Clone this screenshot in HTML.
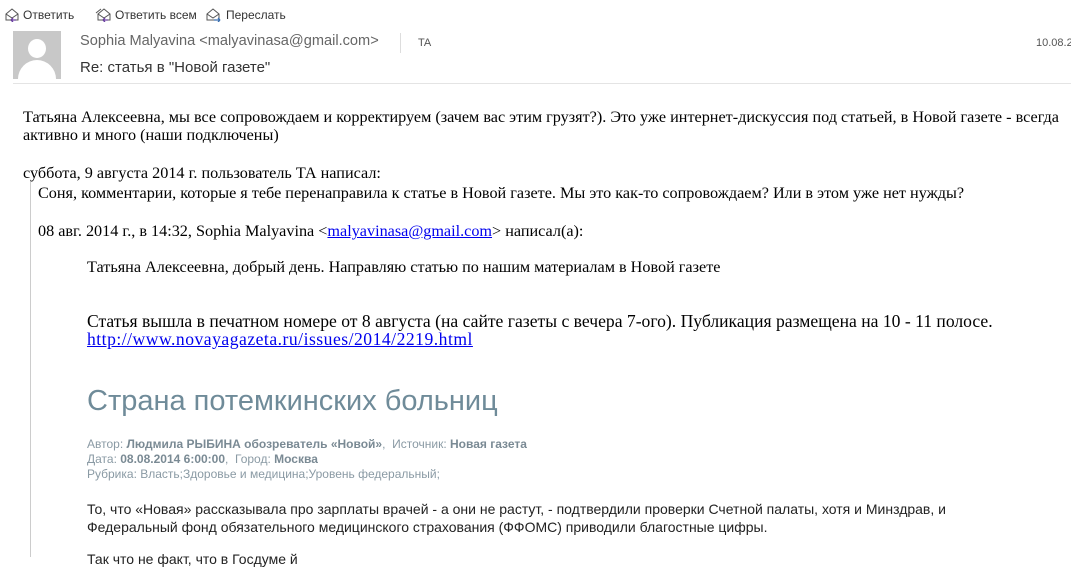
<!DOCTYPE html>
<html><head><meta charset="utf-8"><style>
body{margin:0;width:1071px;height:557px;overflow:hidden;background:#fff;position:relative;font-family:"Liberation Serif","Noto Serif CJK SC",serif;color:#000}
.a{position:absolute;white-space:nowrap}
.ui{font-family:"Liberation Sans","Noto Sans CJK SC",sans-serif}
.tb{font-size:12px;color:#333;top:8px}
.s{font-size:16.2px}
.m{font-family:"Liberation Sans",sans-serif;font-size:12px;color:#8a9aa4}
.m b{color:#7a8a94}
.p{font-family:"Liberation Sans",sans-serif;font-size:14px;color:#222}
a{color:#00e;text-decoration:underline}
</style></head><body>
<svg class="a" style="left:5px;top:8px" width="16" height="14" viewBox="0 0 16 14"><path d="M1 6 L7 1 L13 6 V12 H1 Z M1 6 L7 10 L13 6" fill="none" stroke="#555" stroke-width="1"/><path d="M6 12 H11 M6 12 l2 -2 M6 12 l2 2" stroke="#6a3fa0" stroke-width="1.3" fill="none"/></svg>
<div class="a ui tb" style="left:23px">Ответить</div>
<svg class="a" style="left:95px;top:7px" width="18" height="15" viewBox="0 0 18 15"><path d="M1 6 L6 2 M3 7 L9 2 L15 7 V13 H3 Z M3 7 L9 11 L15 7" fill="none" stroke="#555" stroke-width="1"/><path d="M8 13 H13 M8 13 l2 -2 M8 13 l2 2" stroke="#6a3fa0" stroke-width="1.3" fill="none"/></svg>
<div class="a ui tb" style="left:115px">Ответить всем</div>
<svg class="a" style="left:206px;top:8px" width="16" height="14" viewBox="0 0 16 14"><path d="M1 6 L7 1 L13 6 V12 H1 Z M1 6 L7 10 L13 6" fill="none" stroke="#555" stroke-width="1"/><path d="M8 12 H14 M14 12 l-2 -2 M14 12 l-2 2" stroke="#3a6fb0" stroke-width="1.3" fill="none"/></svg>
<div class="a ui tb" style="left:226px">Переслать</div>

<div class="a" style="left:13px;top:31px;width:48px;height:48px;background:#c8c8c8;overflow:hidden">
<div style="position:absolute;left:15px;top:8px;width:18px;height:19px;border-radius:50%;background:#fff"></div>
<div style="position:absolute;left:5px;top:29px;width:38px;height:30px;border-radius:19px 19px 0 0;background:#fff"></div></div>
<div class="a ui" style="left:80px;top:33px;font-size:14.6px;color:#666">Sophia Malyavina &lt;malyavinasa@gmail.com&gt;</div>
<div class="a" style="left:400px;top:33px;width:1px;height:20px;background:#ddd"></div>
<div class="a ui" style="left:418px;top:37px;font-size:11px;color:#555">TA</div>
<div class="a ui" style="left:1036px;top:37px;font-size:11px;color:#555">10.08.2</div>
<div class="a ui" style="left:80px;top:59px;font-size:15px;color:#333">Re: статья в "Новой газете"</div>
<div class="a" style="left:13px;top:83px;width:1058px;height:1px;background:#e4e4e4"></div>

<div class="a s" style="left:23px;top:108px">Татьяна Алексеевна, мы все сопровождаем и корректируем (зачем вас этим грузят?). Это уже интернет-дискуссия под статьей, в Новой газете - всегда</div>
<div class="a s" style="left:23px;top:126px">активно и много (наши подключены)</div>
<div class="a s" style="left:23px;top:164px">суббота, 9 августа 2014 г. пользователь ТА написал:</div>
<div class="a" style="left:30px;top:182px;width:1px;height:375px;background:#ccc"></div>
<div class="a s" style="left:38px;top:184px">Соня, комментарии, которые я тебе перенаправила к статье в Новой газете. Мы это как-то сопровождаем? Или в этом уже нет нужды?</div>
<div class="a s" style="left:38px;top:222px">08 авг. 2014 г., в 14:32, Sophia Malyavina &lt;<a>malyavinasa@gmail.com</a>&gt; написал(а):</div>
<div class="a s" style="left:87px;top:258px">Татьяна Алексеевна, добрый день. Направляю статью по нашим материалам в Новой газете</div>
<div class="a" style="left:87px;top:311px;font-size:17.6px">Статья вышла в печатном номере от 8 августа (на сайте газеты с вечера 7-ого). Публикация размещена на 10 - 11 полосе.</div>
<div class="a" style="left:87px;top:329px;font-size:17.6px;letter-spacing:0.5px"><a>http://www.novayagazeta.ru/issues/2014/2219.html</a></div>
<div class="a ui" style="left:87px;top:385px;font-size:29px;color:#6f8b99">Страна потемкинских больниц</div>
<div class="a m" style="left:87px;top:437px">Автор: <b>Людмила РЫБИНА обозреватель «Новой»</b>,&nbsp; Источник: <b>Новая газета</b></div>
<div class="a m" style="left:87px;top:452px">Дата: <b>08.08.2014 6:00:00</b>,&nbsp; Город: <b>Москва</b></div>
<div class="a m" style="left:87px;top:467px">Рубрика: Власть;Здоровье и медицина;Уровень федеральный;</div>
<div class="a p" style="left:87px;top:501px">То, что «Новая» рассказывала про зарплаты врачей - а они не растут, - подтвердили проверки Счетной палаты, хотя и Минздрав, и</div>
<div class="a p" style="left:87px;top:519px">Федеральный фонд обязательного медицинского страхования (ФФОМС) приводили благостные цифры.</div>
<div class="a p" style="left:87px;top:551px">Так что не факт, что в Госдуме й</div>
</body></html>
